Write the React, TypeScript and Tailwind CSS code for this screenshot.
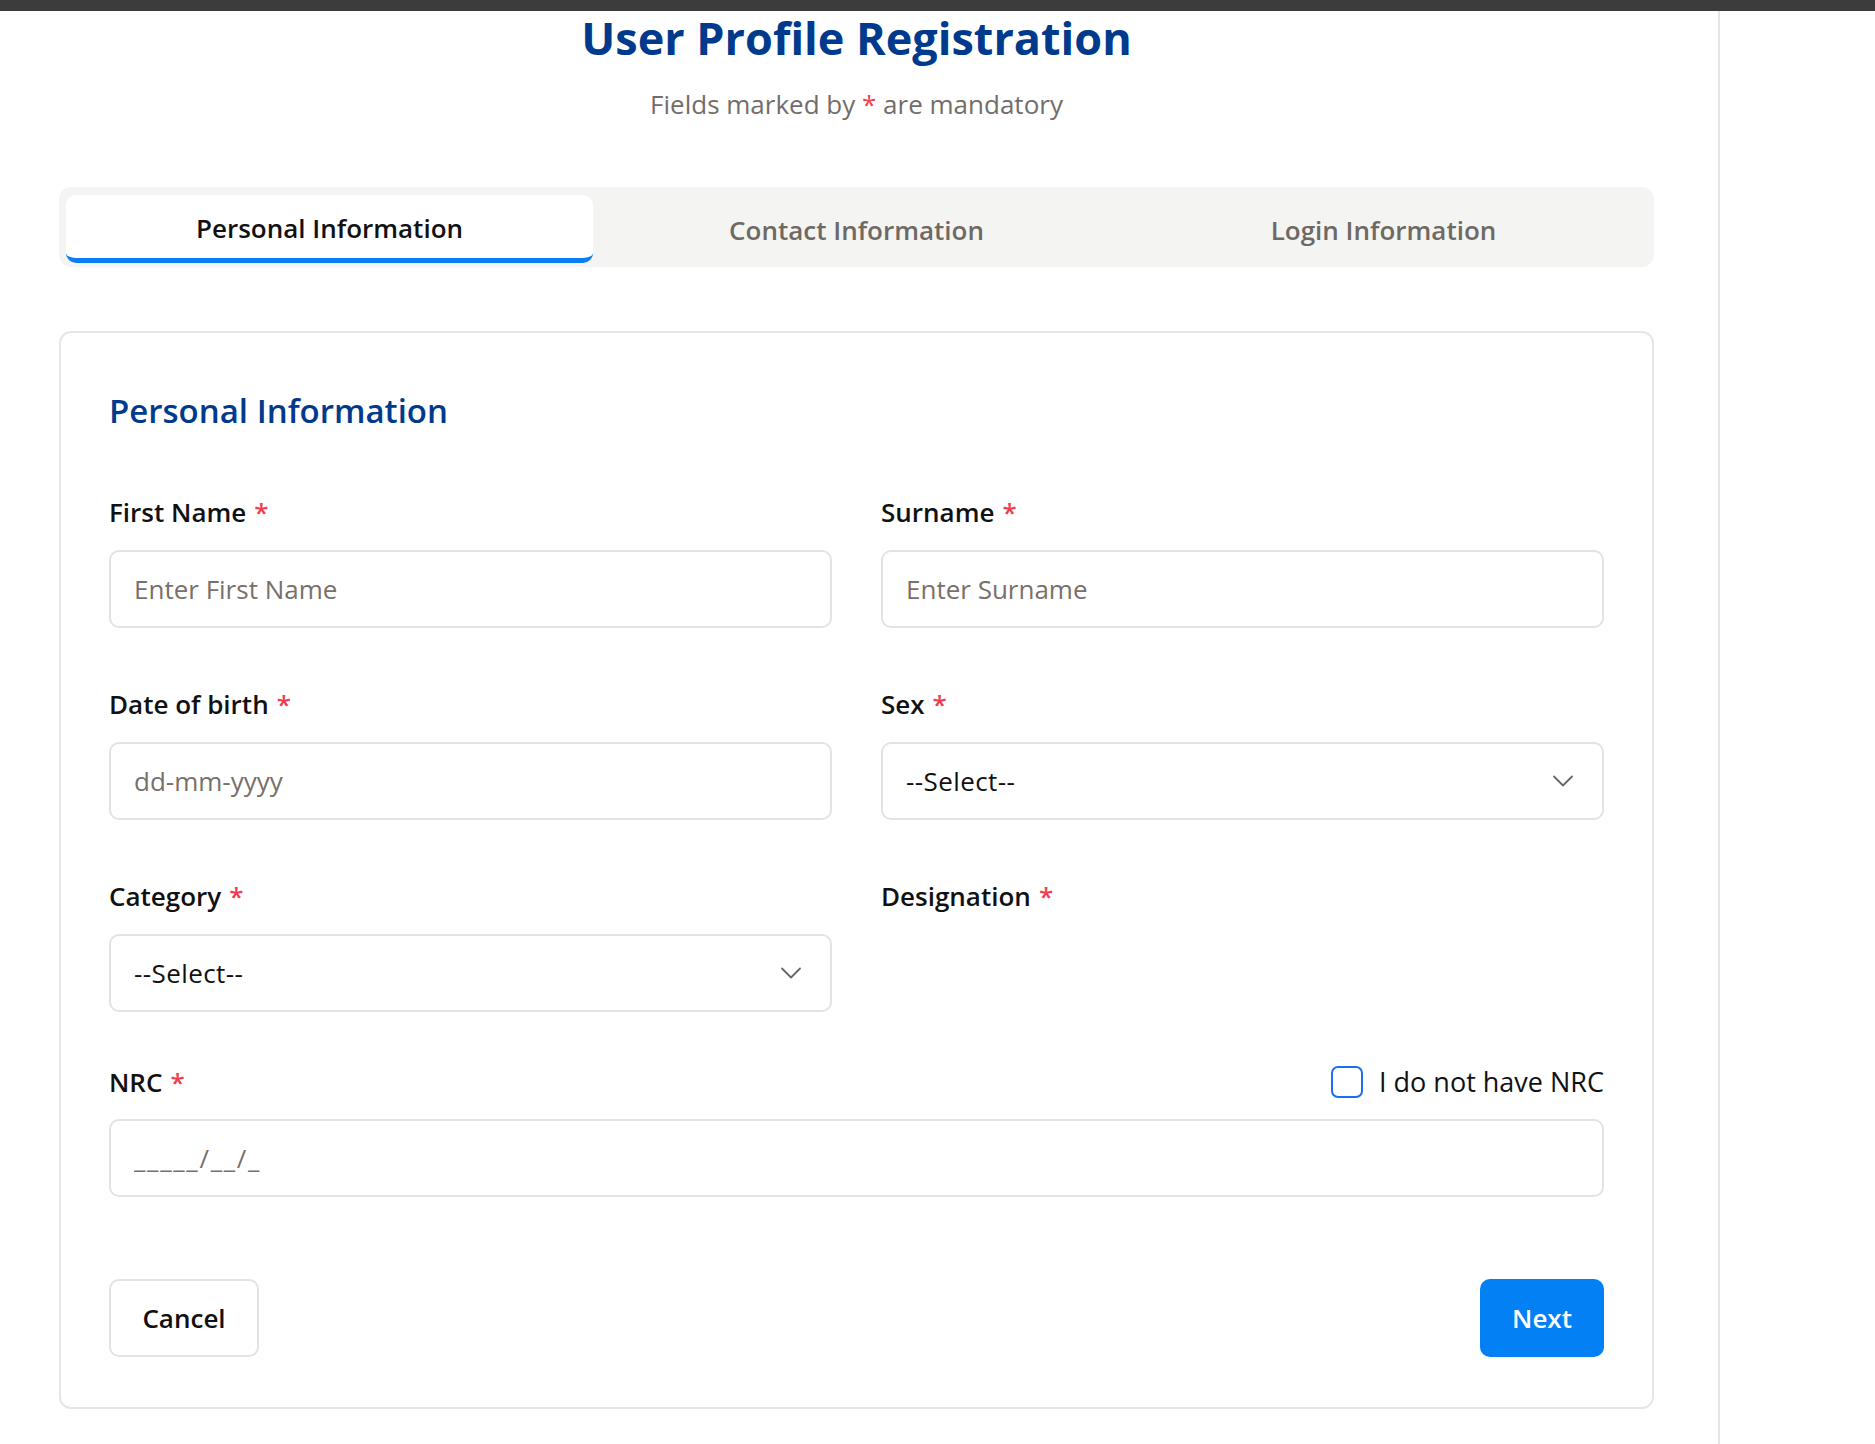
import React from "react";
import { ChevronDown } from "lucide-react";

function Req() {
  return <span className="ml-[8px] text-[#f03e4e]">*</span>;
}

function Label({ children }: { children: React.ReactNode }) {
  return (
    <label className="block text-[26px] font-semibold leading-[36px] text-[#111111]">
      {children}
      <Req />
    </label>
  );
}

function TextInput({ placeholder, wide }: { placeholder: string; wide?: boolean }) {
  return (
    <input
      type="text"
      placeholder={placeholder}
      className={
        wide
          ? "mt-[20px] block h-[78px] w-full rounded-[10px] border-2 border-[#e3e3e3] bg-white px-[23px] text-[26px] tracking-[1.7px] text-[#111111] outline-none placeholder:text-[#77706b]"
          : "mt-[20px] block h-[78px] w-full rounded-[10px] border-2 border-[#e3e3e3] bg-white px-[23px] text-[26px] text-[#111111] outline-none placeholder:text-[#77706b]"
      }
    />
  );
}

function SelectInput() {
  return (
    <div className="relative mt-[20px]">
      <select className="block h-[78px] w-full appearance-none rounded-[10px] border-2 border-[#e3e3e3] bg-white px-[23px] text-[26px] tracking-[0.4px] text-[#111111] outline-none">
        <option>--Select--</option>
      </select>
      <ChevronDown
        size={36}
        strokeWidth={1.2}
        className="pointer-events-none absolute right-[23px] top-1/2 -translate-y-1/2 text-[#666666]"
      />
    </div>
  );
}

export default function App() {
  return (
    <div className="flex min-h-[1444px] flex-col bg-white font-['Open_Sans','Noto_Sans',sans-serif]">
      <div className="h-[11px] bg-[#3c3c3c]" />
      <div className="flex flex-1">
        <main className="w-[1720px] border-r-2 border-[#e5e5e5] pl-[59px] pr-[64px]">
          <h1 className="text-center text-[45px] font-bold leading-[53px] text-[#003a8c]">
            User Profile Registration
          </h1>
          <p className="mt-[22px] text-center text-[26px] leading-[36px] text-[#736d69]">
            Fields marked by <span className="text-[#f03e4e]">*</span> are mandatory
          </p>

          <div className="mt-[65px] grid h-[80px] grid-cols-3 rounded-[12px] bg-[#f4f4f3] px-[7px] pb-[4px] pt-[8px]">
            <button className="flex items-center justify-center rounded-[10px] border-b-[5px] border-[#0a7ff0] bg-white pt-[4px] text-[26px] font-semibold text-[#111111]">
              Personal Information
            </button>
            <button className="flex items-center justify-center pt-[3px] text-[26px] font-semibold text-[#6f6964]">
              Contact Information
            </button>
            <button className="flex items-center justify-center pt-[3px] text-[26px] font-semibold text-[#6f6964]">
              Login Information
            </button>
          </div>

          <section className="mt-[64px] rounded-[12px] border-2 border-[#e6e6e6] px-[48px] pb-[50px] pt-[55px]">
            <h2 className="text-[33px] font-semibold leading-[46px] text-[#003a8c]">
              Personal Information
            </h2>

            <div className="mt-[60px] grid grid-cols-2 gap-x-[49px] gap-y-[58px]">
              <div>
                <Label>First Name</Label>
                <TextInput placeholder="Enter First Name" />
              </div>
              <div>
                <Label>Surname</Label>
                <TextInput placeholder="Enter Surname" />
              </div>
              <div>
                <Label>Date of birth</Label>
                <TextInput placeholder="dd-mm-yyyy" />
              </div>
              <div>
                <Label>Sex</Label>
                <SelectInput />
              </div>
              <div>
                <Label>Category</Label>
                <SelectInput />
              </div>
              <div>
                <Label>Designation</Label>
              </div>
            </div>

            <div className="mt-[53px] flex h-[34px] items-center justify-between">
              <Label>NRC</Label>
              <label className="flex items-center text-[27px] leading-[34px] text-[#111111]">
                <input
                  type="checkbox"
                  className="h-[32px] w-[32px] appearance-none rounded-[7px] border-2 border-[#1b6ff3] bg-white"
                />
                <span className="ml-[16px]">I do not have NRC</span>
              </label>
            </div>
            <TextInput placeholder="_____/__/_" wide />

            <div className="mt-[82px] flex items-center justify-between">
              <button className="h-[78px] w-[150px] rounded-[10px] border-2 border-[#e3e3e3] bg-white text-[26px] font-semibold text-[#111111]">
                Cancel
              </button>
              <button className="h-[78px] w-[124px] rounded-[10px] bg-[#0380f4] text-[26px] font-semibold text-white">
                Next
              </button>
            </div>
          </section>
        </main>
        <aside className="flex-1" />
      </div>
    </div>
  );
}
